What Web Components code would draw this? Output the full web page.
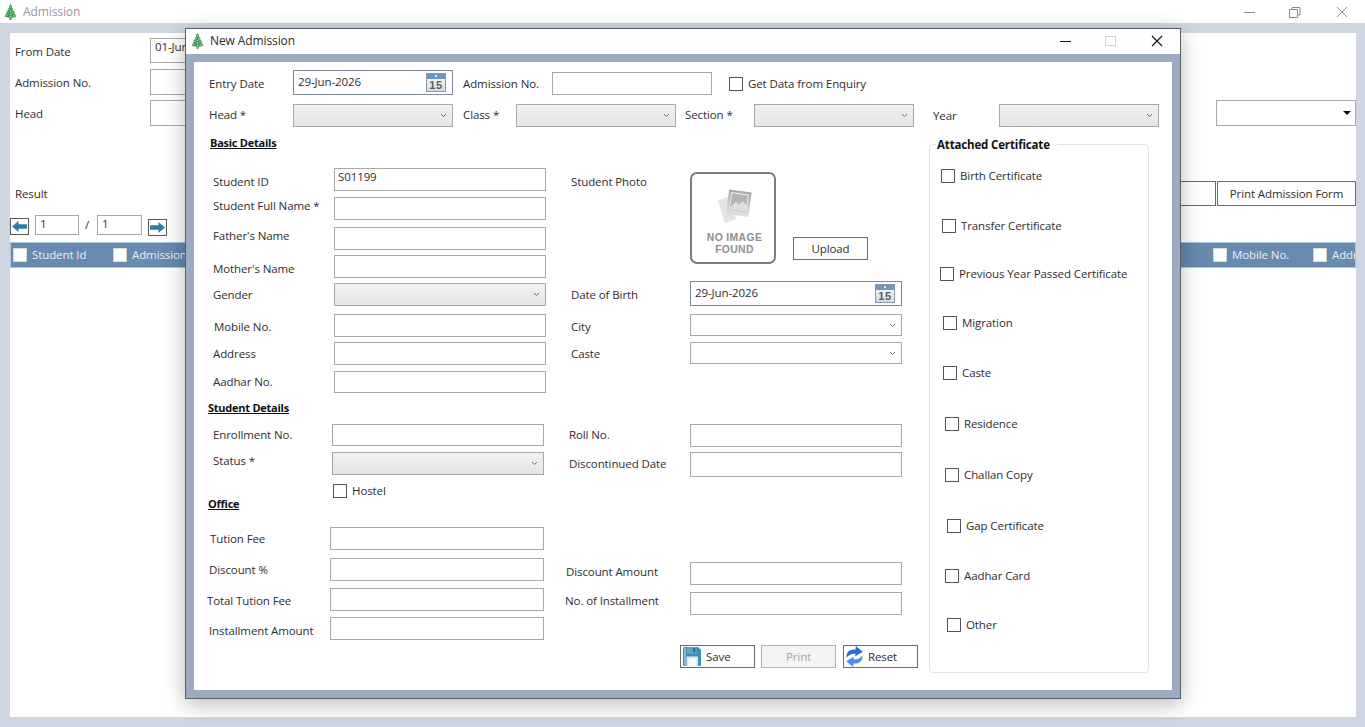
<!DOCTYPE html>
<html><head><meta charset="utf-8"><title>Admission</title>
<style>
html,body{margin:0;padding:0;height:100%;overflow:hidden;background:#cfd6e2;font:11.5px/16px "Open Sans","Noto Sans",sans-serif;letter-spacing:-.1px;color:#2a2a2a}
</style>
<script>
for(const p of ['w','h','x','top','dy','cx','ml','px','g','c','pl','j']) CSS.registerProperty({name:'--'+p,syntax:'*',inherits:false});
const ICONS={
tree:`<svg width="13" height="16" viewBox="0 0 13 16"><rect x="5.500" y="13" width="2" height="3" fill="#9a7d52"/><path d="M6.500 0 8.200 2.600 7.700 3.200 9.600 5.400 9 6 11 8.700 10.400 9.300 12.400 12.300Q11.500 13.600 6.500 13.800 1.500 13.600.6 12.300L2.600 9.300 2 8.700 4 6 3.400 5.400 5.300 3.200 4.800 2.600Z" fill="#3f9a58"/><g fill="#c4e4bb"><circle cx="6.400" cy="2.800" r=".7"/><circle cx="5" cy="5.400" r=".7"/><circle cx="8" cy="5.800" r=".7"/><circle cx="6.500" cy="7.400" r=".7"/><circle cx="3.900" cy="8.600" r=".7"/><circle cx="8.900" cy="9" r=".7"/><circle cx="6.400" cy="10.200" r=".7"/><circle cx="3" cy="11.600" r=".7"/><circle cx="10" cy="11.800" r=".7"/><circle cx="6.600" cy="12.400" r=".7"/></g></svg>`,
cal:`<svg width="20" height="19" viewBox="0 0 20 19"><defs><linearGradient id="c" x1="0" y1="0" x2="0" y2="1"><stop offset="0" stop-color="#fff"/><stop offset="1" stop-color="#d5d9de"/></linearGradient></defs><rect x=".5" y=".5" width="19" height="18" fill="url(#c)" stroke="#8d98a4"/><rect x="1" y="1" width="18" height="5" fill="#6b97c4"/><circle cx="10" cy="3" r="1.100" fill="#fff"/><text x="10" y="16.400" text-anchor="middle" font-family="'Liberation Sans',sans-serif" font-size="11" font-weight="700" letter-spacing=".6" fill="#55606c">15</text></svg>`,
left:`<svg width="15" height="11" viewBox="0 0 15 11"><path d="M6.500 0V3.200H15V7.800H6.500V11L0 5.500Z" fill="#2c7fa6"/></svg>`,
right:`<svg width="15" height="11" viewBox="0 0 15 11"><path d="M8.500 0V3.200H0V7.800H8.500V11L15 5.500Z" fill="#2c7fa6"/></svg>`,
save:`<svg width="18" height="19" viewBox="0 0 18 19"><path d="M1.500 0H15L18 3V17.500Q18 19 16.500 19H1.500Q0 19 0 17.500V1.500Q0 0 1.500 0Z" fill="#3a8db3"/><rect x="1" y="1" width="2" height="17" fill="#7fbcd6"/><rect x="4" y="0" width="9.500" height="7" fill="#5ea6c6"/><rect x="10" y="1" width="2.200" height="4.500" fill="#2b7498"/><rect x="3.500" y="9.500" width="11.500" height="9.500" fill="#d9ebf3"/><rect x="5.500" y="11.500" width="7.500" height="7.500" fill="#f6fbfd"/></svg>`,
reset:`<svg width="17" height="21" viewBox="0 0 17 21"><path d="M.5 11.500C0 6 4 2.800 9.500 3.600L9.800 0 16.800 5.800 9 10.500 9.400 7.700C6 7.300 3.200 8.500.5 11.500Z" fill="#2a6fd0"/><path d="M16.500 9.500C17 15 13 18.200 7.500 17.400L7.200 21 .2 15.200 8 10.500 7.600 13.300C11 13.700 13.800 12.500 16.500 9.500Z" fill="#4a90e6"/></svg>`,
noimg:`<svg width="34" height="34" viewBox="0 0 36 36"><defs><linearGradient id="n" x1="0" y1="0" x2="0" y2="1"><stop offset="0" stop-color="#a4a4a4"/><stop offset="1" stop-color="#e2e2e2"/></linearGradient></defs><path d="M0 12 12 8 19 32 7 36Z" fill="#e4e4e4"/><g transform="rotate(8 22 15)"><rect x="10" y="2" width="24" height="26" fill="url(#n)"/><rect x="12.500" y="4.500" width="19" height="17" fill="#eeeeee"/><rect x="13.500" y="5.500" width="17" height="15" fill="#b4b4b4"/><path d="M13.500 20.500 19 14 22 16.500 26 12.500 30.500 16V20.500Z" fill="#e0e0e0"/></g></svg>`
};
function def(name,css,html,init){
  customElements.define(name,class extends HTMLElement{
    constructor(){super();this.attachShadow({mode:'open'}).innerHTML=`<style>${css}</style>${html}`}
    connectedCallback(){
      for(const a of this.getAttributeNames()){ if(a!=='style') this.style.setProperty('--'+a,/^-?\d+$/.test(this.getAttribute(a))?this.getAttribute(a)+'px':this.getAttribute(a)) }
      const $=s=>this.shadowRoot.querySelector(s);
      if(init) init.call(this,$);
    }
  });
}
const ctl=`:host{display:block;box-sizing:border-box;position:relative;width:var(--w,212px);height:var(--h,23px);border:1px solid #a8a8a8;background:#fff;padding:0 2px 0 var(--pl,2px);white-space:nowrap;overflow:hidden;color:#2e2e2e;flex:none}`;
const chev=`<svg class="ch" width="7" height="5" viewBox="0 0 7 5"><path d="M1 1 3.500 3.500 6 1" fill="none" stroke="#707070" stroke-width="1"/></svg>`;

def('x-icon',`:host{display:inline-flex;flex:none}`,`<span></span>`,function($){$('span').innerHTML=ICONS[this.getAttribute('name')];$('span').style.cssText='display:flex'});
def('x-input',ctl,`<slot></slot>`);
def('x-date',ctl+`:host{border-color:#7d8b99;padding:3px 0 0 4px;height:var(--h,25px)} x-icon{position:absolute;right:6px;top:2px}`,`<slot></slot><x-icon name="cal"></x-icon>`);
def('x-select',ctl+`:host{display:flex;align-items:center;justify-content:flex-end;padding-right:5px}
 :host([off]){background:linear-gradient(#f1f1f1,#e5e5e5)}`,chev);
def('x-dropdown',ctl+`:host{display:flex;align-items:center;justify-content:flex-end;padding-right:4px}
 i{width:0;height:0;border:4px solid transparent;border-top:4px solid #111;border-bottom:0}`,`<i></i>`);
def('x-check',`:host{display:flex;align-items:center;height:14px;margin:var(--top,0) 0 0 var(--x,0);gap:5px;color:#2e2e2e;white-space:nowrap}
 b{flex:none;box-sizing:border-box;width:14px;height:14px;border:1px solid #555;background:#fff}`,`<b></b><slot></slot>`);
def('x-button',`:host{display:flex;align-items:center;justify-content:var(--j,center);box-sizing:border-box;width:var(--w,75px);height:var(--h,23px);border:1px solid #6a6a6a;background:#fff;color:#2e2e2e;flex:none;white-space:nowrap;margin-left:var(--ml,0)}
 :host([disabled]){background:#f3f3f3;border-color:#adb1b5;color:#a3a3a3}`,`<slot></slot>`);
def('x-arrow',`:host{display:flex;align-items:center;justify-content:center;box-sizing:border-box;width:19px;height:17px;border:1px solid #5a5a5a;background:#fff;flex:none;margin-top:var(--top,0)}`,`<slot></slot>`);
def('x-heading',`:host{display:block;font-weight:700;font-size:11px;letter-spacing:-.25px;text-decoration:underline;color:#111;height:16px;margin:var(--top,0) 0 0 var(--x,0)}`,`<slot></slot>`);
def('x-field',`:host{display:grid;grid-template-columns:var(--cx) auto;margin-top:var(--top,0);justify-content:start}
 span{--x:inherit;--dy:inherit;margin:var(--dy,0) 0 0 var(--x,0);white-space:nowrap;height:16px;color:#2e2e2e}`,`<span></span><slot></slot>`,function($){$('span').textContent=this.getAttribute('label')});
def('x-row',`:host{display:flex;margin-top:var(--top,0);align-items:flex-start}`,`<slot></slot>`);
def('x-text',`:host{display:block;white-space:nowrap;margin:var(--dy,0) 0 0 var(--x,0);flex:none;height:16px;color:#2e2e2e;width:var(--w,auto)}`,`<slot></slot>`);
def('x-col',`:host{display:block;flex:none;width:var(--w)}`,`<slot></slot>`);
def('x-photo',`:host{display:flex;flex:none;flex-direction:column;align-items:center;box-sizing:border-box;width:86px;height:92px;border:2px solid #7b7b7b;border-radius:7px;background:#fff;padding:15px 0 0 3px}
 div{font:700 10.400px/12px "Liberation Sans",sans-serif;color:#8f8f8f;text-align:center;letter-spacing:.35px;margin-top:9px}`,`<x-icon name="noimg"></x-icon><div>NO IMAGE<br>FOUND</div>`);
def('x-group',`:host{display:block;box-sizing:border-box;flex:none;width:220px;height:529px;margin:17px 0 0 9px;border:1px solid #dfe3e8;border-radius:4px}
 h4{margin:-8px 0 0 7px;padding:0 7px 0 0;font:700 11.500px/16px "Open Sans",sans-serif;letter-spacing:-.15px;color:#111;background:#fff;width:max-content}`,`<h4></h4><slot></slot>`,function($){$('h4').textContent=this.getAttribute('legend')});
def('x-winbtns',`:host{display:flex;margin-left:auto;height:100%;align-items:center}
 svg{display:block;fill:none}`,``,function(){
   const c=this.getAttribute('color'),m=this.getAttribute('mid');
   const dlg=this.hasAttribute('dialog');
   this.shadowRoot.innerHTML+=dlg
   ?`<svg width="12" height="12" viewBox="0 0 12 12" style="margin-right:33px"><path d="M0 6.500H11" stroke="${c}"/></svg><svg width="12" height="12" viewBox="0 0 12 12" style="margin-right:34px"><rect x=".5" y="1.500" width="10" height="9" stroke="${m}"/></svg><svg width="12" height="12" viewBox="0 0 12 12" style="margin-right:17px"><path d="M1 1 11 11M11 1 1 11" stroke="${c}" stroke-width="1.100"/></svg>`
   :`<svg width="12" height="12" viewBox="0 0 12 12" style="margin-right:33px"><path d="M0 6.500H11" stroke="${c}"/></svg><svg width="12" height="12" viewBox="0 0 12 12" style="margin-right:35px"><path d="M.5 3.500H8.500V11.500H.5ZM3 3.500V1.500H11V9H8.500" stroke="${c}"/></svg><svg width="12" height="12" viewBox="0 0 12 12" style="margin-right:17px"><path d="M1 1 11 11M11 1 1 11" stroke="${c}"/></svg>`;
});
def('x-titlebar',`:host{display:flex;box-sizing:border-box;align-items:center;background:#fff;height:var(--h);flex:none;padding-left:var(--px);color:var(--c)}
 span{--g:inherit;margin-left:var(--g);font-size:12px}`,`<x-icon name="tree"></x-icon><span></span><slot></slot>`,function($){$('span').textContent=this.getAttribute('text')});
def('x-window',`:host{display:flex;flex-direction:column;height:727px;background:#cfd6e2;position:relative;overflow:hidden}
 .in{margin:10px 9px 10px 10px;flex:1;background:#fff;overflow:hidden;padding-top:5px;display:block}`,`<slot name="bar"></slot><div class="in"><slot></slot></div><slot name="over"></slot>`);
def('x-dialog',`:host{position:absolute;left:185px;top:28px;width:996px;height:671px;box-sizing:border-box;display:flex;flex-direction:column;background:#9dabc2;border:1px solid #5a6068;box-shadow:0 5px 20px rgba(0,0,0,.28)}
 .in{margin:8px;flex:1;background:#fff;display:block;overflow:hidden}`,`<slot name="bar"></slot><div class="in"><slot></slot></div>`);
def('x-gridhead',`:host{display:flex;box-sizing:border-box;height:26px;margin-top:6px;background:#678aae;border:1px solid #a9c4dc;color:#e9eff5;align-items:center;padding-left:2px;overflow:hidden;white-space:nowrap}`,`<slot></slot>`);
def('x-gridcol',`:host{display:flex;align-items:center;gap:5px;flex:none;width:var(--w);overflow:hidden}
 b{flex:none;width:14px;height:14px;background:#fff;box-sizing:border-box;border:1px solid #d8d8d8}`,`<b></b><slot></slot>`);
</script></head><body>
<x-window>
  <x-titlebar slot="bar" h="23" px="4" g="6" c="#9a9a9a" text="Admission"><x-winbtns color="#8c8c8c" mid="#8c8c8c"></x-winbtns></x-titlebar>

  <x-row><x-text x="5" dy="6" w="135">From Date</x-text><x-input w="160" h="25" pl="4">01-Jun-2026</x-input></x-row>
  <x-row top="6"><x-text x="5" dy="6" w="135">Admission No.</x-text><x-input w="160" h="26"></x-input></x-row>
  <x-row top="5"><x-text x="5" dy="6" w="135">Head</x-text><x-input w="160" h="26"></x-input><x-dropdown w="140" h="26" style="margin-left:auto"></x-dropdown></x-row>
  <x-row top="55" style="justify-content:space-between"><x-text x="5" dy="5">Result</x-text><span style="display:flex;gap:1px"><x-button w="116" h="25"></x-button><x-button w="139" h="25">Print Admission Form</x-button></span></x-row>
  <x-row top="9"><x-arrow top="3"><x-icon name="left"></x-icon></x-arrow><x-input w="44" h="20" pl="4" style="margin-left:6px">1</x-input><x-text x="6" w="12" dy="2">/</x-text><x-input w="45" h="20" pl="4">1</x-input><x-arrow top="4" style="margin-left:6px"><x-icon name="right"></x-icon></x-arrow></x-row>
  <x-gridhead><x-gridcol w="100">Student Id</x-gridcol><x-gridcol w="100">Admission No.</x-gridcol><span style="flex:1"></span><x-gridcol w="100">Mobile No.</x-gridcol><x-gridcol w="42">Address</x-gridcol></x-gridhead>

  <x-dialog slot="over">
    <x-titlebar slot="bar" h="25" px="5" g="6" c="#2a2a2a" text="New Admission" style="padding-bottom:2px"><x-winbtns dialog color="#111" mid="#d4d4d4"></x-winbtns></x-titlebar>

    <x-row top="8">
      <x-text x="15" dy="6" w="84">Entry Date</x-text><x-date w="160">29-Jun-2026</x-date>
      <x-text x="10" dy="6" w="89">Admission No.</x-text><x-input w="160" h="23" style="margin-top:2px"></x-input>
      <x-check x="17" top="7">Get Data from Enquiry</x-check>
    </x-row>
    <x-row top="9">
      <x-text x="15" dy="3" w="84">Head *</x-text><x-select off w="160"></x-select>
      <x-text x="10" dy="3" w="53">Class *</x-text><x-select off w="160"></x-select>
      <x-text x="9" dy="3" w="69">Section *</x-text><x-select off w="160"></x-select>
      <x-text x="19" dy="4" w="66">Year</x-text><x-select off w="160"></x-select>
    </x-row>

    <x-row>
      <x-col w="360">
        <x-heading x="16" top="8">Basic Details</x-heading>
        <x-field label="Student ID" x="19" cx="140" dy="6" top="17"><x-input pl="3">S01199</x-input></x-field>
        <x-field label="Student Full Name *" x="19" cx="140" dy="1" top="6"><x-input></x-input></x-field>
        <x-field label="Father's Name" x="19" cx="140" dy="1" top="7"><x-input></x-input></x-field>
        <x-field label="Mother's Name" x="19" cx="140" dy="6" top="5"><x-input></x-input></x-field>
        <x-field label="Gender" x="19" cx="140" dy="4" top="5"><x-select off></x-select></x-field>
        <x-field label="Mobile No." x="20" cx="140" dy="5" top="8"><x-input></x-input></x-field>
        <x-field label="Address" x="19" cx="140" dy="4" top="5"><x-input></x-input></x-field>
        <x-field label="Aadhar No." x="19" cx="140" dy="3" top="6"><x-input h="22"></x-input></x-field>
        <x-heading x="14" top="7">Student Details</x-heading>
        <x-field label="Enrollment No." x="19" cx="138" dy="3" top="8"><x-input h="22"></x-input></x-field>
        <x-field label="Status *" x="19" cx="138" dy="1" top="6"><x-select off></x-select></x-field>
        <x-check x="139" top="9">Hostel</x-check>
        <x-heading x="14" top="-2">Office</x-heading>
        <x-field label="Tution Fee" x="16" cx="136" dy="4" top="15"><x-input w="214"></x-input></x-field>
        <x-field label="Discount %" x="15" cx="136" dy="4" top="8"><x-input w="214"></x-input></x-field>
        <x-field label="Total Tution Fee" x="13" cx="136" dy="5" top="7"><x-input w="214"></x-input></x-field>
        <x-field label="Installment Amount" x="15" cx="136" dy="6" top="6"><x-input w="214"></x-input></x-field>
      </x-col>
      <x-col w="366">
        <x-row top="45">
          <x-text x="17" dy="2" w="119">Student Photo</x-text><x-photo></x-photo>
          <x-button ml="17" style="margin-top:65px">Upload</x-button>
        </x-row>
        <x-field label="Date of Birth" x="17" cx="136" dy="6" top="17"><x-date>29-Jun-2026</x-date></x-field>
        <x-field label="City" x="17" cx="136" dy="5" top="8"><x-select h="22"></x-select></x-field>
        <x-field label="Caste" x="17" cx="136" dy="4" top="6"><x-select h="22"></x-select></x-field>
        <x-field label="Roll No." x="15" cx="136" dy="3" top="60"><x-input></x-input></x-field>
        <x-field label="Discontinued Date" x="15" cx="136" dy="4" top="5"><x-input h="25"></x-input></x-field>
        <x-field label="Discount Amount" x="12" cx="136" dy="2" top="85"><x-input></x-input></x-field>
        <x-field label="No. of Installment" x="11" cx="136" dy="1" top="7"><x-input></x-input></x-field>
        <x-row top="30" style="padding-left:126px">
          <x-button j="flex-start" style="padding-left:2px;gap:5px"><x-icon name="save"></x-icon>Save</x-button>
          <x-button ml="6" disabled>Print</x-button>
          <x-button ml="7" j="flex-start" style="padding-left:2px;gap:5px"><x-icon name="reset"></x-icon>Reset</x-button>
        </x-row>
      </x-col>
      <x-group legend="Attached Certificate">
        <x-check x="11" top="16">Birth Certificate</x-check>
        <x-check x="12" top="36">Transfer Certificate</x-check>
        <x-check x="10" top="34">Previous Year Passed Certificate</x-check>
        <x-check x="13" top="35">Migration</x-check>
        <x-check x="13" top="36">Caste</x-check>
        <x-check x="15" top="37">Residence</x-check>
        <x-check x="15" top="37">Challan Copy</x-check>
        <x-check x="17" top="37">Gap Certificate</x-check>
        <x-check x="15" top="36">Aadhar Card</x-check>
        <x-check x="17" top="35">Other</x-check>
      </x-group>
    </x-row>
  </x-dialog>
</x-window>
</body></html>
